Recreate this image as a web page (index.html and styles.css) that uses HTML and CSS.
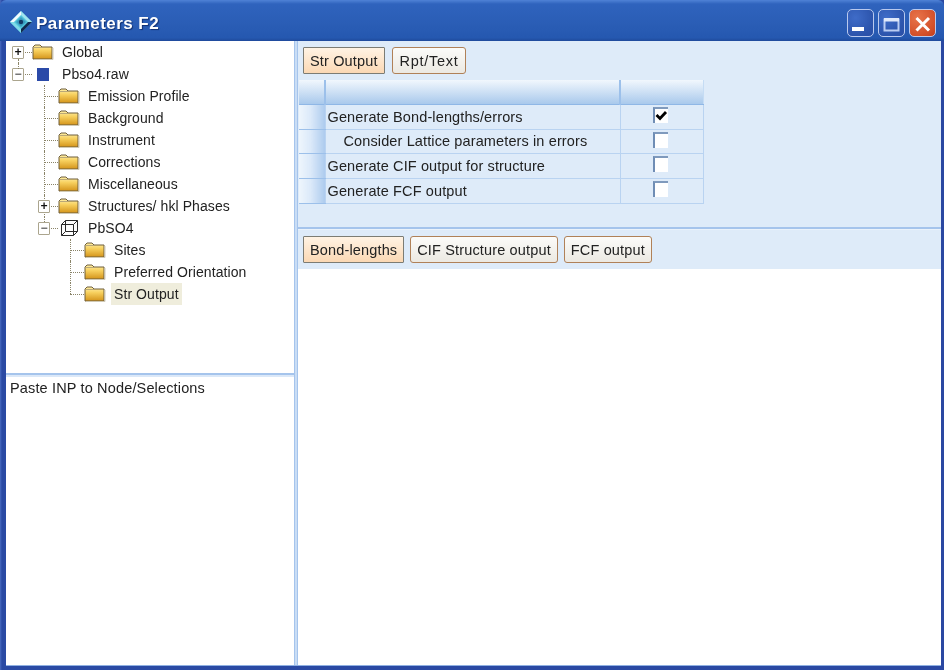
FILE: index.html
```html
<!DOCTYPE html>
<html lang="en">
<head>
<meta charset="utf-8">
<title>Parameters F2</title>
<link rel="stylesheet" href="styles.css">
</head>
<body>
<svg class="defs" width="0" height="0" aria-hidden="true">
  <defs>
    <linearGradient id="fg" x1="0" y1="0" x2="0" y2="1">
      <stop offset="0" stop-color="#ffefa8"/>
      <stop offset=".4" stop-color="#f7d05e"/>
      <stop offset="1" stop-color="#d4941a"/>
    </linearGradient>
    <symbol id="folder" viewBox="0 0 22 16">
      <path d="M1 15V3L3 1H8L10 3H20V15Z" fill="url(#fg)" stroke="#6f5f3c" stroke-width="1"/>
      <path d="M1.5 3.5H10" stroke="#b9a878" stroke-width="1"/>
      <path d="M21 4V15.5H2" fill="none" stroke="#cfc9b6" stroke-width="1"/>
    </symbol>
  </defs>
</svg>
<div class="window">
  <header class="titlebar">
    <svg class="app-icon" width="24" height="24" viewBox="0 0 24 24">
      <path d="M12 1L23 12L12 23L1 12Z" fill="#4fc4da"/>
      <path d="M12 1L1 12L5 12L12 5Z" fill="#f2fbfd"/>
      <path d="M12 1L23 12L19 12L12 5Z" fill="#9fe4ee"/>
      <path d="M23 12L12 23L12 19L19 12Z" fill="#12284f"/>
      <path d="M1 12L12 23L12 19L5 12Z" fill="#7fdbe8"/>
      <path d="M12 7L17 12L12 17L7 12Z" fill="#3a9cc0"/>
      <circle cx="12" cy="12" r="2.2" fill="#123a66"/>
    </svg>
    <h1 class="title">Parameters F2</h1>
    <div class="win-buttons">
      <button class="win-btn"><svg width="27" height="27" viewBox="0 0 27 27"><rect x="5" y="17" width="12" height="4" fill="#fff"/></svg></button>
      <button class="win-btn"><svg width="27" height="27" viewBox="0 0 27 27"><rect x="6.5" y="9.5" width="14" height="11" fill="none" stroke="#b9ccf2" stroke-width="2"/><rect x="6" y="8" width="15" height="3.5" fill="#dfe8fa"/></svg></button>
      <button class="win-btn close"><svg width="27" height="27" viewBox="0 0 27 27"><path d="M7.5 8L20 20.5M20 8L7.5 20.5" stroke="#fff" stroke-width="3"/></svg></button>
    </div>
  </header>
  <div class="client">
    <aside class="left">
      <nav class="tree">
        <div class="row l0 stem-down"><span class="exp">+</span><svg class="ico"><use href="#folder"/></svg><span class="lbl">Global</span></div>
        <div class="row l0 stem-up"><span class="exp minus">−</span><span class="raw-ico"></span><span class="lbl">Pbso4.raw</span></div>
        <div class="row l1 v-full"><svg class="ico"><use href="#folder"/></svg><span class="lbl">Emission Profile</span></div>
        <div class="row l1 v-full"><svg class="ico"><use href="#folder"/></svg><span class="lbl">Background</span></div>
        <div class="row l1 v-full"><svg class="ico"><use href="#folder"/></svg><span class="lbl">Instrument</span></div>
        <div class="row l1 v-full"><svg class="ico"><use href="#folder"/></svg><span class="lbl">Corrections</span></div>
        <div class="row l1 v-full"><svg class="ico"><use href="#folder"/></svg><span class="lbl">Miscellaneous</span></div>
        <div class="row l1 v-full"><span class="exp">+</span><svg class="ico"><use href="#folder"/></svg><span class="lbl">Structures/ hkl Phases</span></div>
        <div class="row l1 v-half"><span class="exp minus">−</span><svg class="ico cube" viewBox="0 0 22 16"><path d="M3.5 15.5V4.5L7.5 .5H19.5V11.5L15.5 15.5ZM3.5 4.5H15.5V15.5M15.5 4.5L19.5 .5M7.5 .5V11.5H19.5M7.5 11.5L3.5 15.5" fill="none" stroke="#2a2a2a" stroke-width="1"/></svg><span class="lbl">PbSO4</span></div>
        <div class="row l2 v-full"><svg class="ico"><use href="#folder"/></svg><span class="lbl">Sites</span></div>
        <div class="row l2 v-full"><svg class="ico"><use href="#folder"/></svg><span class="lbl">Preferred Orientation</span></div>
        <div class="row l2 v-half"><svg class="ico"><use href="#folder"/></svg><span class="lbl selected">Str Output</span></div>
      </nav>
      <div class="h-split"></div>
      <div class="info">Paste INP to Node/Selections</div>
    </aside>
    <div class="v-split"></div>
    <main class="right">
      <section class="top-panel">
        <div class="tabs first-tabs">
          <button class="tab active">Str Output</button>
          <button class="tab wide">Rpt/Text</button>
        </div>
        <table class="grid">
          <thead>
            <tr><th class="gutter"></th><th class="name"></th><th class="check"></th></tr>
          </thead>
          <tbody>
            <tr class="r25"><td class="gutter"></td><td class="name">Generate Bond-lengths/errors</td><td class="check"><span class="cb on"><svg width="13" height="13" viewBox="0 0 13 13"><path d="M1.5 6L5 9.5L11 3" fill="none" stroke="#000" stroke-width="2.8"/></svg></span></td></tr>
            <tr class="r24"><td class="gutter"></td><td class="name sub">Consider Lattice parameters in errors</td><td class="check"><span class="cb"></span></td></tr>
            <tr class="r25"><td class="gutter"></td><td class="name">Generate CIF output for structure</td><td class="check"><span class="cb"></span></td></tr>
            <tr class="r25"><td class="gutter"></td><td class="name">Generate FCF output</td><td class="check"><span class="cb"></span></td></tr>
          </tbody>
        </table>
      </section>
      <div class="r-split"></div>
      <section class="tab-panel">
        <div class="tabs">
          <button class="tab active">Bond-lengths</button>
          <button class="tab">CIF Structure output</button>
          <button class="tab">FCF output</button>
        </div>
      </section>
      <section class="content"></section>
    </main>
  </div>
</div>
</body>
</html>
```
FILE: styles.css
```css
* { box-sizing: border-box; }
html, body { margin: 0; height: 100%; overflow: hidden; background: #fff; }
.defs { position: absolute; }
.window {
  width: 944px; height: 670px; display: flex; flex-direction: column;
  background: linear-gradient(90deg, #4a6cc0 0, #2a4aa4 2px, #2a48a2 100%);
  padding: 0 3px 4px 6px;
  font-family: "Liberation Sans", Arial, sans-serif; font-size: 14.5px; color: #222;
  filter: blur(.45px);
}
.titlebar {
  height: 41px; margin: 0 -3px 0 -6px; padding: 0 8px 0 9px; display: flex; align-items: center; gap: 3px;
  background: linear-gradient(#4f82d6 0, #2f63bd 4px, #2a5db5 60%, #2558b0 92%, #1f4a9c 100%);
  border-radius: 6px 6px 0 0;
}
.app-icon { flex: none; margin-top: 2px; }
.title {
  margin: 6px 0 0 0; font-size: 17px; font-weight: bold; color: #fff; letter-spacing: .45px;
  text-shadow: 1px 1px 1px #123070;
}
.win-buttons { margin-left: auto; display: flex; gap: 4px; margin-top: 4px; }
.win-btn {
  width: 27px; height: 28px; padding: 0; display: block;
  border: 1px solid #b9c9ee; border-radius: 5px;
  background: radial-gradient(circle at 30% 30%, #3f6cc8, #2c54ac 70%, #2a4fa6);
}
.win-btn svg { display: block; margin: 0 0 0 -1px; }
.win-btn.close { background: radial-gradient(circle at 30% 30%, #e8744a, #d3502a 70%, #c03d1c); }

.client { flex: 1; min-height: 0; display: flex; background: #fff; border-bottom: 1px solid #8fb0e2; }
.left { width: 288px; flex: none; display: flex; flex-direction: column; }
.tree { height: 332px; background: #fff; }
.row { position: relative; height: 22px; display: flex; align-items: center; }
.row::before { content: ""; position: absolute; top: 11px; height: 0; border-top: 1px dotted #8a8468; }
.row::after { content: ""; position: absolute; top: 0; width: 0; border-left: 1px dotted #8a8468; }
.l0 { padding-left: 26px; }
.l0::before { left: 12px; width: 14px; }
.l1 { padding-left: 52px; }
.l1::before { left: 38px; width: 14px; }
.l2 { padding-left: 78px; }
.l2::before { left: 64px; width: 14px; }
.l0::after { display: none; }
.l1::after { left: 38px; }
.l2::after { left: 64px; }
.v-full::after { height: 22px; }
.v-half::after { height: 11px; }
.stem-down .exp::after, .stem-up .exp::before {
  content: ""; position: absolute; left: 5px; height: 6px; border-left: 1px dotted #8a8468;
}
.stem-down .exp::after { top: 12px; }
.stem-up .exp::before { top: -6px; }
.ico { width: 22px; height: 16px; flex: none; }
.lbl { padding: 2px 3px; margin-left: 5px; white-space: nowrap; line-height: 18px; font-size: 14px; letter-spacing: .08px; }
.selected { background: #efeddc; }
.exp {
  position: absolute; top: 5px; width: 12px; height: 13px; z-index: 1;
  display: flex; align-items: center; justify-content: center;
  border: 1px solid #aba58e; background: #fff; border-radius: 1px;
  font: bold 12px/1 "Liberation Mono", monospace; color: #111;
}
.exp.minus { color: #666; }
.l0 .exp { left: 6px; }
.l1 .exp { left: 32px; }
.raw-ico { width: 12px; height: 13px; background: #2b4aa8; margin-left: 5px; flex: none; }
.raw-ico + .lbl { margin-left: 10px; }

.h-split { height: 4px; background: #dbe8f8; border-top: 2px solid #a5c4ec; }
.info { flex: 1; background: #fff; padding: 2px 4px; line-height: 18px; white-space: nowrap; letter-spacing: .15px; }
.v-split { width: 4px; flex: none; background: #c9ddf5; border-left: 1px solid #a5c4ec; border-right: 1px solid #a5c4ec; }

.right { flex: 1; min-width: 0; display: flex; flex-direction: column; }
.top-panel { height: 186px; background: #deebf9; padding: 6px 0 0 5px; }
.tabs { display: flex; gap: 6px; }
.tab {
  height: 27px; padding: 0 6px; border: 1px solid #b08158; border-radius: 3px;
  font: 14.5px "Liberation Sans", Arial, sans-serif; color: #222; white-space: nowrap; letter-spacing: .15px;
  background: linear-gradient(#fbfbf9, #ece9e2);
}
.tab.wide { letter-spacing: .7px; padding: 0 7px; }
.tab.active { border-color: #7c7c74; border-radius: 1px; background: linear-gradient(#fff3e4, #fbd8b4); }
.first-tabs { margin-bottom: 6px; gap: 7px; }
.grid { border-collapse: collapse; table-layout: fixed; width: 404px; margin-left: -4px; }
.grid th { height: 24px; padding: 0; background: linear-gradient(#f1f7fd, #a9c9ec); border-right: 2px solid #9cc0ea; border-bottom: 1px solid #8fb7e6; }
.grid th:last-child { border-right: 1px solid #c5dcf4; }
.grid td { padding: 0 0 0 2px; height: 24px; border: 1px solid #b9d3f1; }
.gutter { width: 26px; }
.grid td.gutter { background: linear-gradient(90deg, #eef5fc, #dbe9f9 45%, #adcbee); border-color: #9cc0ea; border-left: 0; border-right: 0; }
.name { width: 295px; }
.check { width: 83px; }
.r25 td { height: 25px; }
.r24 td { height: 24px; }
.grid td.name { white-space: nowrap; letter-spacing: .12px; }
.grid td.sub { padding-left: 18px; }
.grid td.check { padding: 0; }
.cb {
  display: block; width: 15px; height: 16px; margin: 0 0 3px 32px;
  background: #fff; border-left: 2px solid #6f8db5; border-top: 2px solid #7f9abd;
}
.cb svg { display: block; }
.r-split { height: 3px; background: linear-gradient(#a5c4ec 0 2px, #eaf2fb 2px); }
.tab-panel { height: 39px; background: #deebf9; padding: 6px 0 0 5px; }
.content { flex: 1; background: #fff; }
```
